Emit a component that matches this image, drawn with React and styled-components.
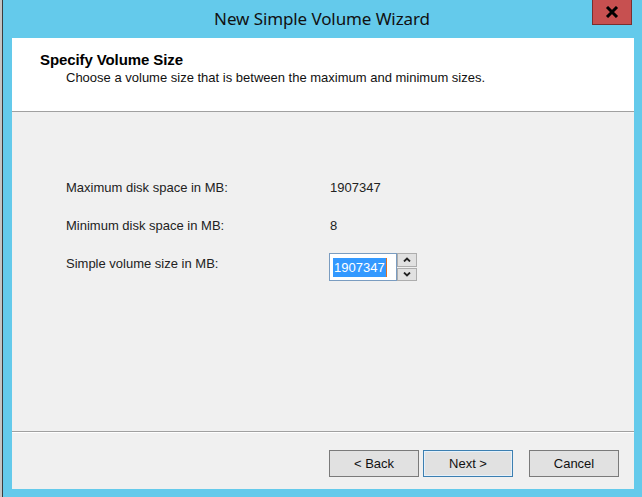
import React from "react";
import styled, { createGlobalStyle } from "styled-components";

const GlobalStyle = createGlobalStyle`
    html, body {
        margin: 0;
        padding: 0;
        background: #d8d8d8;
    }
    body {
        font-family: "Liberation Sans", Arial, sans-serif;
        font-size: 13px;
        color: #000;
    }
`;

const rows = [
    { label: "Maximum disk space in MB:", value: "1907347" },
    { label: "Minimum disk space in MB:", value: "8" },
];

const ChevronIcon = ({ up }) => (
    <svg width="8" height="5" viewBox="0 0 8 5">
        <path
            d={up ? "M1 4.5 L4 1.5 L7 4.5" : "M1 0.5 L4 3.5 L7 0.5"}
            fill="none"
            stroke="#222"
            strokeWidth="1.8"
        />
    </svg>
);

const CloseIcon = () => (
    <svg width="14" height="12" viewBox="0 0 14 12">
        <path d="M2 1 L12 11 M12 1 L2 11" stroke="#000" strokeWidth="3" />
    </svg>
);

const App = () => {
    return (
        <Screen>
            <GlobalStyle />
            <BackStrip />
            <Window>
                <TitleBar>
                    <span />
                    <Title>New Simple Volume Wizard</Title>
                    <CloseButton>
                        <CloseIcon />
                    </CloseButton>
                </TitleBar>
                <Client>
                    <Header>
                        <HeaderTitle>Specify Volume Size</HeaderTitle>
                        <HeaderText>Choose a volume size that is between the maximum and minimum sizes.</HeaderText>
                    </Header>
                    <Body>
                        {rows.map(row => (
                            <Row key={row.label}>
                                <Label>{row.label}</Label>
                                <Value>{row.value}</Value>
                            </Row>
                        ))}
                        <Row>
                            <Label>Simple volume size in MB:</Label>
                            <SpinBox>
                                <SpinInput>
                                    <Selected>1907347</Selected>
                                    <Caret />
                                </SpinInput>
                                <SpinButtons>
                                    <SpinButton><ChevronIcon up /></SpinButton>
                                    <SpinButton><ChevronIcon /></SpinButton>
                                </SpinButtons>
                            </SpinBox>
                        </Row>
                    </Body>
                    <Footer>
                        <Button>&lt; Back</Button>
                        <Button $focused>Next &gt;</Button>
                        <Button $spaced>Cancel</Button>
                    </Footer>
                </Client>
            </Window>
        </Screen>
    );
};
export default App;

const Screen = styled.div`
    display: flex;
    width: 642px;
    height: 497px;
    overflow: hidden;
`;

const BackStrip = styled.div`
    width: 2px;
    background: #c4c4c4;
    border-right: 1px solid #3c3c3c;
`;

const Window = styled.div`
    flex: 1;
    display: flex;
    flex-direction: column;
    background: #64caeb;
    padding: 0 8px 8px 9px;
`;

const TitleBar = styled.div`
    height: 38px;
    display: grid;
    grid-template-columns: 1fr auto 1fr;
    margin-right: -8px;
    padding-right: 10px;
`;

const Title = styled.div`
    font-family: "Noto Sans", "Open Sans", sans-serif;
    font-size: 17px;
    line-height: 38px;
    color: #111;
    letter-spacing: -0.1px;
`;

const CloseButton = styled.div`
    justify-self: end;
    align-self: start;
    width: 38px;
    height: 24px;
    background: #c75050;
    border: 1px solid #7a2f2f;
    border-top: none;
    display: flex;
    align-items: center;
    justify-content: center;
`;

const Client = styled.div`
    flex: 1;
    display: flex;
    flex-direction: column;
    background: #f0f0f0;
`;

const Header = styled.div`
    height: 74px;
    background: #fff;
    border-bottom: 1px solid #a0a0a0;
    padding: 13px 0 0 28px;
    box-sizing: border-box;
`;

const HeaderTitle = styled.div`
    font-weight: bold;
    font-size: 15px;
    line-height: 17px;
    letter-spacing: -0.1px;
`;

const HeaderText = styled.div`
    padding-left: 26px;
    margin-top: 2px;
    line-height: 16px;
    color: #111;
`;

const Body = styled.div`
    flex: 1;
    display: flex;
    flex-direction: column;
    gap: 12px;
    padding: 63px 0 0 54px;
    border-bottom: 1px solid #a0a0a0;
    color: #222;
`;

const Row = styled.div`
    display: grid;
    grid-template-columns: 264px auto;
    align-items: start;
`;

const Label = styled.span`
    line-height: 26px;
`;

const Value = styled.span`
    line-height: 26px;
`;

const SpinBox = styled.div`
    display: flex;
    align-items: stretch;
    height: 28px;
    margin: 2px 0 0 -1px;
`;

const SpinInput = styled.div`
    width: 68px;
    box-sizing: border-box;
    border: 1px solid #7a9cc0;
    background: #fff;
    display: flex;
    align-items: center;
    padding-left: 3px;
`;

const Selected = styled.span`
    background: #3399ff;
    color: #fff;
    line-height: 19px;
    padding: 0 1px;
`;

const Caret = styled.span`
    width: 1px;
    height: 19px;
    background: #e07020;
`;

const SpinButtons = styled.div`
    display: flex;
    flex-direction: column;
    gap: 1px;
    width: 20px;
`;

const SpinButton = styled.div`
    flex: 1;
    background: #e1e1e1;
    border: 1px solid #adadad;
    display: flex;
    align-items: center;
    justify-content: center;
`;

const Footer = styled.div`
    height: 57px;
    display: flex;
    justify-content: flex-end;
    align-items: flex-start;
    gap: 4px;
    padding: 17px 15px 0 0;
    box-sizing: border-box;
    border-top: 1px solid #fff;
`;

const Button = styled.button`
    width: 90px;
    height: 27px;
    margin-left: ${({ $spaced }) => ($spaced ? "12px" : "0")};
    background: #e1e1e1;
    border: 1px solid ${({ $focused }) => ($focused ? "#3c7fb1" : "#7a7a7a")};
    box-shadow: inset 0 0 0 1px ${({ $focused }) => ($focused ? "#e5f1fb" : "#e1e1e1")};
    font-family: "Liberation Sans", Arial, sans-serif;
    font-size: 13px;
    color: #111;
    padding: 0;
`;
